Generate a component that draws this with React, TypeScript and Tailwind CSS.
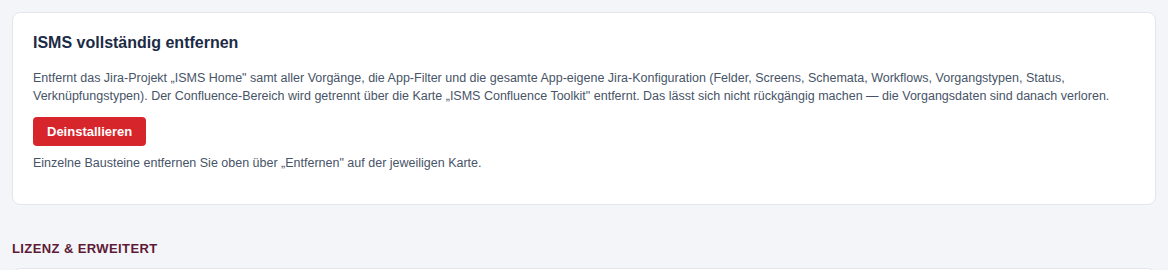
export default function App() {
  return (
    <div className="min-h-[270px] bg-[#f4f5f9] px-3 pt-3 font-['Liberation_Sans',Arial,sans-serif]">
      <div className="rounded-lg border border-[#e4e6ec] bg-white px-5 pt-[19px] pb-[32px]">
        <h2 className="text-[16px] font-bold leading-[22px] text-[#1c2b45]">ISMS vollständig entfernen</h2>
        <p className="mt-[15px] text-[12.5px] leading-[18px] text-[#475467]">
          Entfernt das Jira-Projekt „ISMS Home" samt aller Vorgänge, die App-Filter und die gesamte App-eigene Jira-Konfiguration (Felder, Screens, Schemata, Workflows, Vorgangstypen, Status, Verknüpfungstypen). Der Confluence-Bereich wird getrennt über die Karte „ISMS Confluence Toolkit" entfernt. Das lässt sich nicht rückgängig machen — die Vorgangsdaten sind danach verloren.
        </p>
        <button className="mt-[12px] h-[29px] rounded-[4px] bg-[#d7262b] px-[14px] text-[13px] font-bold leading-[29px] text-white">
          Deinstallieren
        </button>
        <p className="mt-[8px] text-[12.5px] leading-[18px] text-[#475467]">
          Einzelne Bausteine entfernen Sie oben über „Entfernen" auf der jeweiligen Karte.
        </p>
      </div>
      <h3 className="mt-[35px] text-[13px] font-bold uppercase leading-[18px] tracking-[0.4px] text-[#5e1a36]">Lizenz &amp; Erweitert</h3>
      <div className="mt-[10px] h-[20px] rounded-t-lg border border-[#e4e6ec] bg-white" />
    </div>
  );
}
